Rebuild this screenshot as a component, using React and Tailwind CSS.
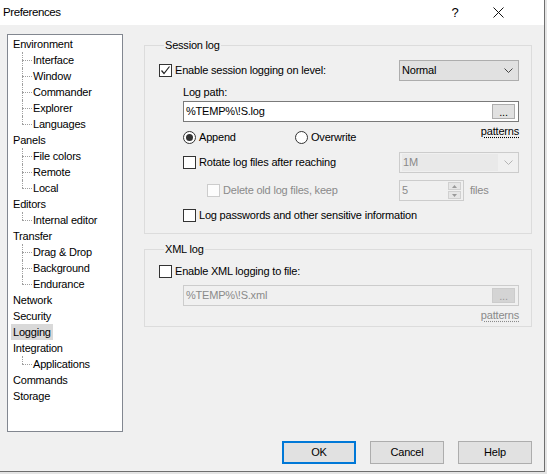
import React from "react";

const FONT = { fontFamily: '"Liberation Sans", Arial, sans-serif' };

function Checkbox({ checked, disabled }) {
  return (
    <span
      className={
        "w-[13px] h-[13px] shrink-0 border flex items-center justify-center " +
        (disabled ? "border-[#cccccc] bg-[#fcfcfc]" : "border-[#333333] bg-white")
      }
    >
      {checked && (
        <svg width="11" height="11" viewBox="0 0 11 11">
          <path d="M1.5 5.5 L4 8.5 L9.5 1.5" fill="none" stroke="#222" strokeWidth="1.2" />
        </svg>
      )}
    </span>
  );
}

function Radio({ checked }) {
  return (
    <span className="w-[13px] h-[13px] shrink-0 rounded-full border border-[#333333] bg-white flex items-center justify-center">
      {checked && <span className="w-[7px] h-[7px] rounded-full bg-[#333333]" />}
    </span>
  );
}

function Chevron({ color }) {
  return (
    <svg width="9" height="5" viewBox="0 0 9 5">
      <path d="M0.5 0.5 L4.5 4.5 L8.5 0.5" fill="none" stroke={color} strokeWidth="1" />
    </svg>
  );
}

function Patterns({ disabled }) {
  return (
    <span
      className={
        "h-[13px] leading-[13px] underline decoration-dotted underline-offset-[2px] " +
        (disabled ? "text-[#8a8a8a]" : "text-black")
      }
    >
      patterns
    </span>
  );
}

function TreeTop({ label, selected }) {
  return (
    <div className="h-[16px] flex items-center pl-[3px]">
      <span className={"px-[2px] h-[16px] leading-[16px] " + (selected ? "bg-[#d9d9d9]" : "")}>{label}</span>
    </div>
  );
}

function TreeChildren({ items }) {
  return (
    <div className="flex flex-col">
      {items.map((it, i) => {
        const last = i === items.length - 1;
        return (
          <div key={it} className="h-[16px] flex items-center">
            <div className="w-[14px] h-[16px] shrink-0" />
            <div className="w-[10px] h-[16px] shrink-0 flex flex-col">
              <div className="h-[8px] border-l border-dotted border-[#a0a0a0]" />
              <div
                className={
                  "h-[8px] border-t border-dotted border-[#a0a0a0] " +
                  (last ? "" : "border-l")
                }
              />
            </div>
            <span className="pl-[1px] leading-[16px]">{it}</span>
          </div>
        );
      })}
    </div>
  );
}

function Button({ children, primary }) {
  return (
    <div
      className={
        "w-[74px] h-[23px] flex items-center justify-center bg-[#e1e1e1] " +
        (primary ? "border-2 border-[#0078d7]" : "border border-[#adadad]")
      }
    >
      {children}
    </div>
  );
}

export default function App() {
  return (
    <div className="w-[547px] h-[474px] bg-[#e4e4e4] overflow-hidden text-[11px] tracking-[-0.2px] text-black" style={FONT}>
      <div className="w-[545px] h-[472px] bg-[#f0f0f0] border-r border-b border-[#6e6e6e] flex flex-col">
        {/* Title bar */}
        <div className="h-[25px] bg-white flex items-center justify-between shrink-0">
          <span className="pl-[3px] text-[11.5px] tracking-[-0.4px]">Preferences</span>
          <div className="flex items-center">
            <span className="w-[10px] text-center text-[13px]">?</span>
            <div className="w-[33px]" />
            <svg width="11" height="11" viewBox="0 0 11 11">
              <path d="M0.5 0.5 L10.5 10.5 M10.5 0.5 L0.5 10.5" stroke="#111" strokeWidth="1" />
            </svg>
            <div className="w-[40px]" />
          </div>
        </div>

        {/* Body */}
        <div className="flex flex-col pl-[7px] pt-[9px]">
          <div className="flex">
            {/* Tree */}
            <div className="w-[116px] h-[398px] bg-white border border-[#828790] pt-[1px] flex flex-col">
              <TreeTop label="Environment" />
              <TreeChildren items={["Interface", "Window", "Commander", "Explorer", "Languages"]} />
              <TreeTop label="Panels" />
              <TreeChildren items={["File colors", "Remote", "Local"]} />
              <TreeTop label="Editors" />
              <TreeChildren items={["Internal editor"]} />
              <TreeTop label="Transfer" />
              <TreeChildren items={["Drag & Drop", "Background", "Endurance"]} />
              <TreeTop label="Network" />
              <TreeTop label="Security" />
              <TreeTop label="Logging" selected />
              <TreeTop label="Integration" />
              <TreeChildren items={["Applications"]} />
              <TreeTop label="Commands" />
              <TreeTop label="Storage" />
            </div>

            {/* Right column */}
            <div className="ml-[21px] w-[388px] mt-[5px] flex flex-col">
              {/* Session log */}
              <fieldset className="border border-[#dcdcdc] pl-[14px] pr-[12px] pb-[11px]">
                <legend className="ml-[5px] px-[1px] h-[13px] leading-[13px]">Session log</legend>
                <div className="mt-[8px] h-[21px] flex items-center">
                  <div className="flex-1 flex items-center">
                    <Checkbox checked />
                    <span className="ml-[3px]">Enable session logging on level:</span>
                  </div>
                  <div className="w-[120px] h-[21px] bg-[#e1e1e1] border border-[#adadad] flex items-center justify-between pl-[2px] pr-[5px]">
                    <span>Normal</span>
                    <Chevron color="#444" />
                  </div>
                </div>
                <div className="mt-[5px] ml-[24px] h-[13px] leading-[13px]">Log path:</div>
                <div className="mt-[2px] ml-[24px] h-[21px] bg-white border border-[#7a7a7a] flex items-center justify-between pl-[2px] pr-[3px]">
                  <span>%TEMP%\!S.log</span>
                  <div className="w-[23px] h-[15px] bg-[#e1e1e1] border border-[#adadad] flex items-end justify-center leading-[12px]">
                    ...
                  </div>
                </div>
                <div className="ml-[24px] mt-[3px] flex items-start justify-between">
                  <div className="mt-[6px] flex items-center h-[13px]">
                    <div className="w-[112px] flex items-center">
                      <Radio checked />
                      <span className="ml-[3px]">Append</span>
                    </div>
                    <div className="flex items-center">
                      <Radio />
                      <span className="ml-[3px]">Overwrite</span>
                    </div>
                  </div>
                  <Patterns />
                </div>
                <div className="mt-[8px] h-[21px] flex items-center">
                  <div className="flex-1 flex items-center pl-[24px]">
                    <Checkbox />
                    <span className="ml-[3px]">Rotate log files after reaching</span>
                  </div>
                  <div className="w-[120px] h-[21px] bg-[#f0f0f0] border border-[#cccccc] flex items-center justify-between pl-[2px] pr-[5px]">
                    <span className="flex-1 h-[17px] bg-[#e9e9e9] mr-[6px] flex items-center pl-[1px] text-[#8a8a8a]">1M</span>
                    <Chevron color="#b4b4b4" />
                  </div>
                </div>
                <div className="mt-[7px] h-[21px] flex items-center">
                  <div className="flex-1 flex items-center pl-[48px]">
                    <Checkbox disabled />
                    <span className="ml-[3px] text-[#8a8a8a]">Delete old log files, keep</span>
                  </div>
                  <div className="w-[120px] flex items-center">
                    <div className="w-[65px] h-[21px] border border-[#cccccc] bg-[#f0f0f0] flex items-center justify-between pl-[2px] pr-[2px]">
                      <span className="text-[#8a8a8a]">5</span>
                      <div className="w-[13px] flex flex-col gap-[1px]">
                        <div className="h-[8px] bg-[#e6e6e6] border border-[#d0d0d0] flex items-center justify-center">
                          <svg width="5" height="3" viewBox="0 0 5 3"><path d="M0 3 L2.5 0 L5 3 Z" fill="#9a9a9a" /></svg>
                        </div>
                        <div className="h-[8px] bg-[#e6e6e6] border border-[#d0d0d0] flex items-center justify-center">
                          <svg width="5" height="3" viewBox="0 0 5 3"><path d="M0 0 L2.5 3 L5 0 Z" fill="#9a9a9a" /></svg>
                        </div>
                      </div>
                    </div>
                    <span className="ml-[6px] text-[#8a8a8a]">files</span>
                  </div>
                </div>
                <div className="mt-[8px] h-[13px] flex items-center pl-[24px]">
                  <Checkbox />
                  <span className="ml-[3px]">Log passwords and other sensitive information</span>
                </div>
              </fieldset>

              {/* XML log */}
              <fieldset className="mt-[9px] border border-[#dcdcdc] pl-[14px] pr-[12px] pb-[4px]">
                <legend className="ml-[5px] px-[1px] h-[13px] leading-[13px]">XML log</legend>
                <div className="mt-[9px] h-[13px] flex items-center">
                  <Checkbox />
                  <span className="ml-[3px]">Enable XML logging to file:</span>
                </div>
                <div className="mt-[7px] ml-[24px] h-[21px] bg-[#f0f0f0] border border-[#cccccc] flex items-center justify-between pl-[2px] pr-[3px]">
                  <span className="text-[#8a8a8a]">%TEMP%\!S.xml</span>
                  <div className="w-[23px] h-[15px] bg-[#d4d4d4] border border-[#cccccc] flex items-end justify-center leading-[12px] text-[#9a9a9a]">
                    ...
                  </div>
                </div>
                <div className="mt-[3px] flex justify-end">
                  <Patterns disabled />
                </div>
              </fieldset>
            </div>
          </div>

          {/* Buttons */}
          <div className="mt-[9px] flex justify-end gap-[14px] pr-[12px]">
            <Button primary>OK</Button>
            <Button>Cancel</Button>
            <Button>Help</Button>
          </div>
        </div>
      </div>
    </div>
  );
}
